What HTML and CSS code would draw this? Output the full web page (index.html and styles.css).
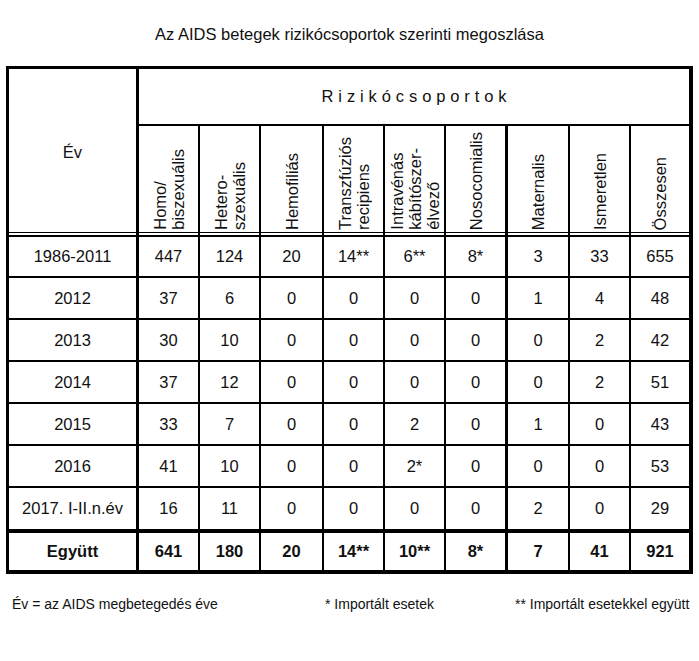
FILE: index.html
```html
<!DOCTYPE html>
<html lang="hu">
<head>
<meta charset="utf-8">
<title>Az AIDS betegek rizikócsoportok szerinti megoszlása</title>
<link rel="stylesheet" href="styles.css">
</head>
<body>
<div class="page">
  <h1 class="title">Az AIDS betegek rizikócsoportok szerinti megoszlása</h1>
  <div class="table">
    <div class="cell year-head">Év</div>
    <div class="cell group-head">Rizikócsoportok</div>
    <div class="row head-row">
      <div class="cell rot"><span>Homo/<br>biszexuális</span></div>
      <div class="cell rot"><span>Hetero-<br>szexuális</span></div>
      <div class="cell rot"><span>Hemofiliás</span></div>
      <div class="cell rot"><span>Transzfúziós<br>recipiens</span></div>
      <div class="cell rot"><span>Intravénás<br>kábítószer-<br>élvező</span></div>
      <div class="cell rot"><span>Nosocomialis</span></div>
      <div class="cell rot"><span>Maternalis</span></div>
      <div class="cell rot"><span>Ismeretlen</span></div>
      <div class="cell rot"><span>Összesen</span></div>
    </div>
    <div class="row data">
      <div class="cell">1986-2011</div><div class="cell">447</div><div class="cell">124</div><div class="cell">20</div><div class="cell">14**</div><div class="cell">6**</div><div class="cell">8*</div><div class="cell">3</div><div class="cell">33</div><div class="cell">655</div>
    </div>
    <div class="row data">
      <div class="cell">2012</div><div class="cell">37</div><div class="cell">6</div><div class="cell">0</div><div class="cell">0</div><div class="cell">0</div><div class="cell">0</div><div class="cell">1</div><div class="cell">4</div><div class="cell">48</div>
    </div>
    <div class="row data">
      <div class="cell">2013</div><div class="cell">30</div><div class="cell">10</div><div class="cell">0</div><div class="cell">0</div><div class="cell">0</div><div class="cell">0</div><div class="cell">0</div><div class="cell">2</div><div class="cell">42</div>
    </div>
    <div class="row data">
      <div class="cell">2014</div><div class="cell">37</div><div class="cell">12</div><div class="cell">0</div><div class="cell">0</div><div class="cell">0</div><div class="cell">0</div><div class="cell">0</div><div class="cell">2</div><div class="cell">51</div>
    </div>
    <div class="row data">
      <div class="cell">2015</div><div class="cell">33</div><div class="cell">7</div><div class="cell">0</div><div class="cell">0</div><div class="cell">2</div><div class="cell">0</div><div class="cell">1</div><div class="cell">0</div><div class="cell">43</div>
    </div>
    <div class="row data">
      <div class="cell">2016</div><div class="cell">41</div><div class="cell">10</div><div class="cell">0</div><div class="cell">0</div><div class="cell">2*</div><div class="cell">0</div><div class="cell">0</div><div class="cell">0</div><div class="cell">53</div>
    </div>
    <div class="row data last-data">
      <div class="cell">2017. I-II.n.év</div><div class="cell">16</div><div class="cell">11</div><div class="cell">0</div><div class="cell">0</div><div class="cell">0</div><div class="cell">0</div><div class="cell">2</div><div class="cell">0</div><div class="cell">29</div>
    </div>
    <div class="row data total">
      <div class="cell">Együtt</div><div class="cell">641</div><div class="cell">180</div><div class="cell">20</div><div class="cell">14**</div><div class="cell">10**</div><div class="cell">8*</div><div class="cell">7</div><div class="cell">41</div><div class="cell">921</div>
    </div>
  </div>
  <div class="notes">
    <span>Év = az AIDS megbetegedés éve</span>
    <span>* Importált esetek</span>
    <span>** Importált esetekkel együtt</span>
  </div>
</div>
</body>
</html>
```
FILE: styles.css
```css
html, body {
  margin: 0;
  padding: 0;
  background: #fff;
}

body {
  font-family: "Liberation Sans", Arial, sans-serif;
  color: #111;
}

.page {
  width: 699px;
  padding-top: 25px;
}

.title {
  margin: 0 0 22px 0;
  font-size: 16.5px;
  line-height: 19px;
  font-weight: normal;
  text-align: center;
}

.table {
  display: grid;
  grid-template-columns: 130px 61px 61px 63px 61px 61px 62px 62px 61px 58px;
  grid-template-rows: 57px 111px 41px 42px 42px 42px 42px 42px 45px 37px;
  width: max-content;
  margin-left: 6px;
  border-style: solid;
  border-color: #000;
  border-width: 3px 4px 4px 3px;
  font-size: 16.5px;
  line-height: 19px;
}

.row {
  display: contents;
}

.cell {
  box-sizing: border-box;
  display: flex;
  align-items: center;
  justify-content: center;
  border-right: 2px solid #000;
  border-bottom: 2px solid #000;
  white-space: nowrap;
}

.year-head {
  grid-row: span 2;
  border-right-width: 3px;
  box-shadow: inset 0 -2px 0 #fff, inset 0 -3px 0 #000;
}

.group-head {
  grid-column: span 9;
  border-right: 0;
  letter-spacing: 4.9px;
  padding-left: 5px;
}

.rot {
  align-items: flex-end;
  padding-bottom: 5px;
  overflow: hidden;
  box-shadow: inset 0 -2px 0 #fff, inset 0 -3px 0 #000;
}

.rot span {
  writing-mode: vertical-rl;
  transform: rotate(180deg);
  line-height: 18px;
}

.head-row .cell:nth-child(6) {
  border-right-width: 3px;
}

.head-row .cell:nth-child(9) {
  border-right: 0;
}

.data .cell:nth-child(1) {
  border-right-width: 3px;
}

.data .cell:nth-child(7) {
  border-right-width: 3px;
}

.data .cell:nth-child(10) {
  border-right: 0;
}

.last-data .cell {
  border-bottom-width: 4px;
}

.total .cell {
  border-bottom: 0;
  font-weight: bold;
}

.notes {
  display: grid;
  grid-template-columns: 313px 190px auto;
  margin-top: 22px;
  padding-left: 12px;
  font-size: 14px;
  line-height: 16px;
}
```
